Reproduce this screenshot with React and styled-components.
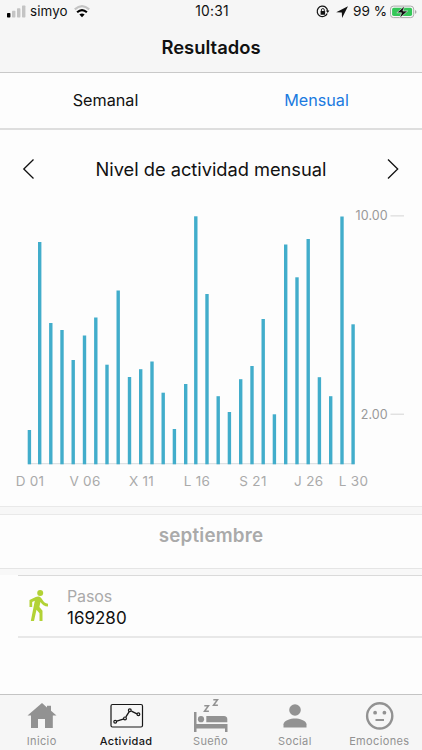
import React from "react";
import styled, { createGlobalStyle } from "styled-components";

const GlobalStyle = createGlobalStyle`
  * { box-sizing: border-box; }
  body { margin: 0; background: #fdfdfd; font-family: Inter, "Liberation Sans", sans-serif; }
`;

const Screen = styled.div`
  display: flex;
  flex-direction: column;
  width: 422px;
  height: 750px;
  overflow: hidden;
  background: #fdfdfd;
  color: #111;
`;

const Header = styled.header`
  height: 73px;
  background: #f6f6f6;
  border-bottom: 1px solid #c9c9c9;
`;

const StatusBar = styled.div`
  display: grid;
  grid-template-columns: 1fr 40px 1fr;
  align-items: center;
  height: 23px;
  padding: 0 5px 0 7px;
  font-size: 13px;
  white-space: nowrap;
`;

const StatusGroup = styled.div`
  display: flex;
  align-items: center;
  justify-content: ${(p) => (p.$end ? "flex-end" : "flex-start")};
`;

const Carrier = styled.span`
  margin: -1px 6px 0 4px;
  font-size: 13.4px;
  letter-spacing: 0.1px;
`;

const Time = styled.span`
  margin-top: -1px;
  text-align: center;
  font-size: 13.8px;
  letter-spacing: 0.2px;
`;

const Battery = styled.span`
  margin: -1px 3px 0 4px;
  font-size: 13.6px;
`;

const PageTitle = styled.h1`
  margin: 0;
  height: 49px;
  line-height: 49px;
  text-align: center;
  font-size: 18.4px;
  font-weight: 600;
  letter-spacing: 0;
`;

const Segments = styled.div`
  display: grid;
  grid-template-columns: 1fr 1fr;
  height: 57px;
  border-bottom: 2px solid #dedede;
`;

const Segment = styled.button`
  border: 0;
  padding: 0 0 1px;
  background: none;
  font: 400 16.2px Inter, sans-serif;
  letter-spacing: 0;
  color: ${(p) => (p.$active ? "#1a7ae0" : "#111")};
`;

const PeriodRow = styled.div`
  display: flex;
  align-items: center;
  justify-content: space-between;
  height: 70px;
  padding: 8px 22px 0;
`;

const PeriodTitle = styled.h2`
  margin: 0;
  font-size: 18.3px;
  font-weight: 400;
  letter-spacing: -0.03px;
`;

const Chart = styled.svg`
  display: block;
  flex: none;
  width: 422px;
  height: 306px;
  font-family: Inter, sans-serif;
`;

const DayLabel = styled.text`
  font-size: 13.5px;
  letter-spacing: 0.3px;
  fill: #aaa;
  text-anchor: middle;
`;

const ScaleLabel = styled.text`
  font-size: 12.5px;
  letter-spacing: 0.1px;
  fill: #999;
  text-anchor: end;
`;

const Divider = styled.div`
  height: 9px;
  flex: none;
  background: #f7f7f7;
  border-top: 1px solid #e9e9e9;
  border-bottom: 1px solid #e9e9e9;
`;

const Month = styled.h3`
  margin: 0;
  height: 53px;
  line-height: 42px;
  text-align: center;
  font-size: 18.8px;
  font-weight: 600;
  letter-spacing: 0.2px;
  color: #aaa;
`;

const ListGap = styled.div`
  height: 7px;
  background: #f8f8f8;
  border-top: 1px solid #e5e5e5;
`;

const MetricRow = styled.section`
  display: flex;
  align-items: center;
  height: 63px;
  margin-left: 18px;
  padding-left: 9px;
  border-top: 1px solid #dadada;
  border-bottom: 2px solid #e8e8e8;
`;

const Metric = styled.dl`
  margin: 1px 0 0 18px;
  line-height: 22px;
`;

const MetricName = styled.dt`
  font-size: 16px;
  letter-spacing: -0.1px;
  color: #aaa;
`;

const MetricValue = styled.dd`
  margin: 0;
  font-size: 17px;
`;

const TabBar = styled.nav`
  display: grid;
  grid-template-columns: repeat(5, 1fr);
  height: 56px;
  margin-top: auto;
  background: #f6f6f6;
  border-top: 1px solid #c4c4c4;
`;

const Tab = styled.a`
  display: flex;
  flex-direction: column;
  align-items: center;
  white-space: nowrap;
  color: ${(p) => (p.$active ? "#171717" : "#929292")};
  font-size: 11px;
  font-weight: ${(p) => (p.$active ? 500 : 400)};
  letter-spacing: 0.35px;
`;

const TabIcon = styled.svg`
  display: block;
  width: 40px;
  height: 40px;
  flex: none;
`;

const TabLabel = styled.span`
  margin-right: 1px;
  line-height: 13px;
`;

const bars = [
  [29.4, 430], [39.7, 242], [50.8, 323], [62, 330], [73.2, 360], [84.5, 335.5],
  [95.8, 317.5], [107, 364.7], [118.2, 290.5], [129.5, 377], [140.7, 369.2],
  [152, 361.5], [163.2, 392.7], [174.4, 429], [185.7, 384], [195.8, 216.3],
  [207, 294], [218.2, 396.2], [229.4, 412], [240.7, 379.2], [252, 366],
  [263.2, 319], [274.4, 414.3], [285.7, 244.5], [297, 277.3], [308.2, 239],
  [319.4, 377.2], [330.7, 396.2], [342, 216.5], [353.1, 324.3],
];

const days = [
  [30, "D 01"], [85, "V 06"], [141.5, "X 11"], [197, "L 16"],
  [253, "S 21"], [308.7, "J 26"], [353.5, "L 30"],
];

const HouseIcon = () => (
  <TabIcon viewBox="0 0 40 40">
    <path fill="currentColor" d="M20 8 5.5 20.5H9V33h7v-9h7v9h7.8V20.5h3.7L29 15.8v-5h-4v1.6Z" />
  </TabIcon>
);

const ActivityIcon = () => (
  <TabIcon viewBox="0 0 40 40" fill="none" stroke="currentColor">
    <rect x="4" y="9.5" width="31.5" height="22.5" rx="1.5" strokeWidth="1.2" />
    <path d="M9.7 26.2 17 23.8M18.9 21.8 22.2 16.7M24.4 16.2 30 18.8" strokeWidth="1.4" />
    <g strokeWidth="1.2">
      <circle cx="8.2" cy="26.8" r="1.4" />
      <circle cx="18" cy="23.4" r="1.4" />
      <circle cx="22.8" cy="15.3" r="1.4" />
      <circle cx="31.4" cy="19.3" r="1.4" />
    </g>
  </TabIcon>
);

const BedIcon = () => (
  <TabIcon viewBox="0 0 40 40">
    <g fill="currentColor">
      <path d="M3 17h2.5v12H36.5v8H34v-3.6H5.5V37H3Z" />
      <circle cx="10" cy="24.2" r="3.1" />
      <path d="M15.3 21H33q3.3.2 3.3 3.2V27.3H15.3Z" />
    </g>
    <path fill="none" stroke="currentColor" strokeWidth="1.5" d="M13.3 10.7h4.2L13.5 16.3h4.4M22.3 4.7h4.2L22.5 10.3h4.4" />
  </TabIcon>
);

const PersonIcon = () => (
  <TabIcon viewBox="0 0 40 40">
    <g fill="currentColor">
      <circle cx="20" cy="15" r="5.8" />
      <path d="M8.5 32.5V29.3C8.5 25.5 16 23.5 20 23.5s11.5 2 11.5 5.8v3.2Z" />
    </g>
  </TabIcon>
);

const FaceIcon = () => (
  <TabIcon viewBox="0 0 40 40">
    <circle cx="19.7" cy="20.9" r="12.6" fill="none" stroke="currentColor" strokeWidth="2.4" />
    <circle cx="15.1" cy="17.7" r="1.9" fill="currentColor" />
    <circle cx="24.4" cy="17.7" r="1.9" fill="currentColor" />
    <path d="M15.5 25H24" stroke="currentColor" strokeWidth="2" />
  </TabIcon>
);

const tabs = [
  { name: "Inicio", icon: HouseIcon },
  { name: "Actividad", icon: ActivityIcon, active: true },
  { name: "Sueño", icon: BedIcon },
  { name: "Social", icon: PersonIcon },
  { name: "Emociones", icon: FaceIcon },
];

export default function App() {
  return (
    <>
      <GlobalStyle />
      <Screen>
        <Header>
          <StatusBar>
            <StatusGroup>
              <svg width="19" height="13" viewBox="0 0 19 13">
                <rect x="0" y="8" width="3.4" height="4.5" rx=".7" fill="#000" />
                <g fill="#c4c4c4">
                  <rect x="5" y="5.8" width="3.4" height="6.7" rx=".7" />
                  <rect x="10" y="3.2" width="3.4" height="9.3" rx=".7" />
                  <rect x="15" y=".5" width="3.4" height="12" rx=".7" />
                </g>
              </svg>
              <Carrier>simyo</Carrier>
              <svg width="16" height="13" viewBox="0 0 16 13" fill="none">
                <path d="M.8 4.4Q8-2 15.2 4.4" stroke="#c4c4c4" strokeWidth="2.2" />
                <path d="M3.1 7.3Q8 2.9 12.9 7.3" stroke="#000" strokeWidth="2.1" />
                <path d="M5.4 9.6Q8 7.4 10.6 9.6L8 12.3Z" fill="#000" />
              </svg>
            </StatusGroup>
            <Time>10:31</Time>
            <StatusGroup $end>
              <svg width="33" height="14" viewBox="0 0 33 14" fill="none">
                <path d="M9.8 2.4A5.2 5.2 0 1 0 11.2 8.4" stroke="#111" strokeWidth="1.2" />
                <path d="M9.3 2.1A5.2 5.2 0 0 1 11.6 5.8" stroke="#111" strokeWidth="1.2" />
                <path d="m9.9 5.6 3.5-.1-1.7 2.5Z" fill="#111" />
                <rect x="4.6" y="6" width="4.5" height="3.8" rx=".4" fill="#111" />
                <path d="M5.4 6.2V5a1.45 1.45 0 0 1 2.9 0v1.2" stroke="#111" strokeWidth=".9" />
                <path d="m32 1.2-11.8 6 5.6.3.3 5.4Z" fill="#111" />
              </svg>
              <Battery>99 %</Battery>
              <svg width="27" height="14" viewBox="0 0 27 14">
                <rect x=".5" y="1.1" width="23.2" height="11.5" rx="3" fill="#f8f8f8" stroke="#aaa" />
                <rect x="2.1" y="2.7" width="20" height="8.3" rx="1.7" fill="#35c759" />
                <path d="M25 5v3.8q1.5-.6 1.5-1.9T25 5Z" fill="#aaa" />
                <path d="M14.8.8 6.8 7.8h4.7L9.6 13.2 17.7 6h-4.8Z" fill="#111" stroke="#f6f6f6" strokeWidth=".6" />
              </svg>
            </StatusGroup>
          </StatusBar>
          <PageTitle>Resultados</PageTitle>
        </Header>
        <Segments>
          <Segment>Semanal</Segment>
          <Segment $active>Mensual</Segment>
        </Segments>
        <PeriodRow>
          <svg width="13" height="22" viewBox="0 0 13 22" fill="none">
            <path d="M11.5 1.5 1.8 11l9.7 9.5" stroke="#111" strokeWidth="1.3" />
          </svg>
          <PeriodTitle>Nivel de actividad mensual</PeriodTitle>
          <svg width="13" height="22" viewBox="0 0 13 22" fill="none">
            <path d="M1 1.5 10.7 11 1 20.5" stroke="#111" strokeWidth="1.3" />
          </svg>
        </PeriodRow>
        <Chart viewBox="0 200 422 306">
          <path d="M28 463.7h326" stroke="#d5dadd" />
          {bars.map(([x, top]) => (
            <rect key={x} x={x - 1.7} y={top} width="3.4" height={464.3 - top} fill="#42adcb" />
          ))}
          {days.map(([x, name]) => (
            <DayLabel key={name} x={x} y="486">{name}</DayLabel>
          ))}
          <ScaleLabel x="387.8" y="220.4">10.00</ScaleLabel>
          <ScaleLabel x="387.8" y="418.6">2.00</ScaleLabel>
          <path d="M390.5 215.9h13.5M390.5 414.2h13.5" stroke="#d4d4d4" />
        </Chart>
        <Divider />
        <Month>septiembre</Month>
        <ListGap />
        <MetricRow>
          <svg width="22" height="34" viewBox="0 0 22 34">
            <circle cx="13.2" cy="4" r="3" fill="#b2d235" />
            <path fill="#b2d235" d="M8.8 8 2.5 10.9V18h2.7v-5L7.8 11.8 3.8 32h3.2l2.5-11.2 3 3.4V32h3V21.8l-3.1-3.7 1-5.1c1.8 2.6 4 4.4 7.6 4.6v-2.8c-2.9-.3-4.3-1.6-5.6-4-1.1-2-2.6-3.5-4.4-3.2Z" />
          </svg>
          <Metric>
            <MetricName>Pasos</MetricName>
            <MetricValue>169280</MetricValue>
          </Metric>
        </MetricRow>
        <TabBar>
          {tabs.map(({ name, icon: Icon, active }) => (
            <Tab key={name} $active={active}>
              <Icon />
              <TabLabel>{name}</TabLabel>
            </Tab>
          ))}
        </TabBar>
      </Screen>
    </>
  );
}
